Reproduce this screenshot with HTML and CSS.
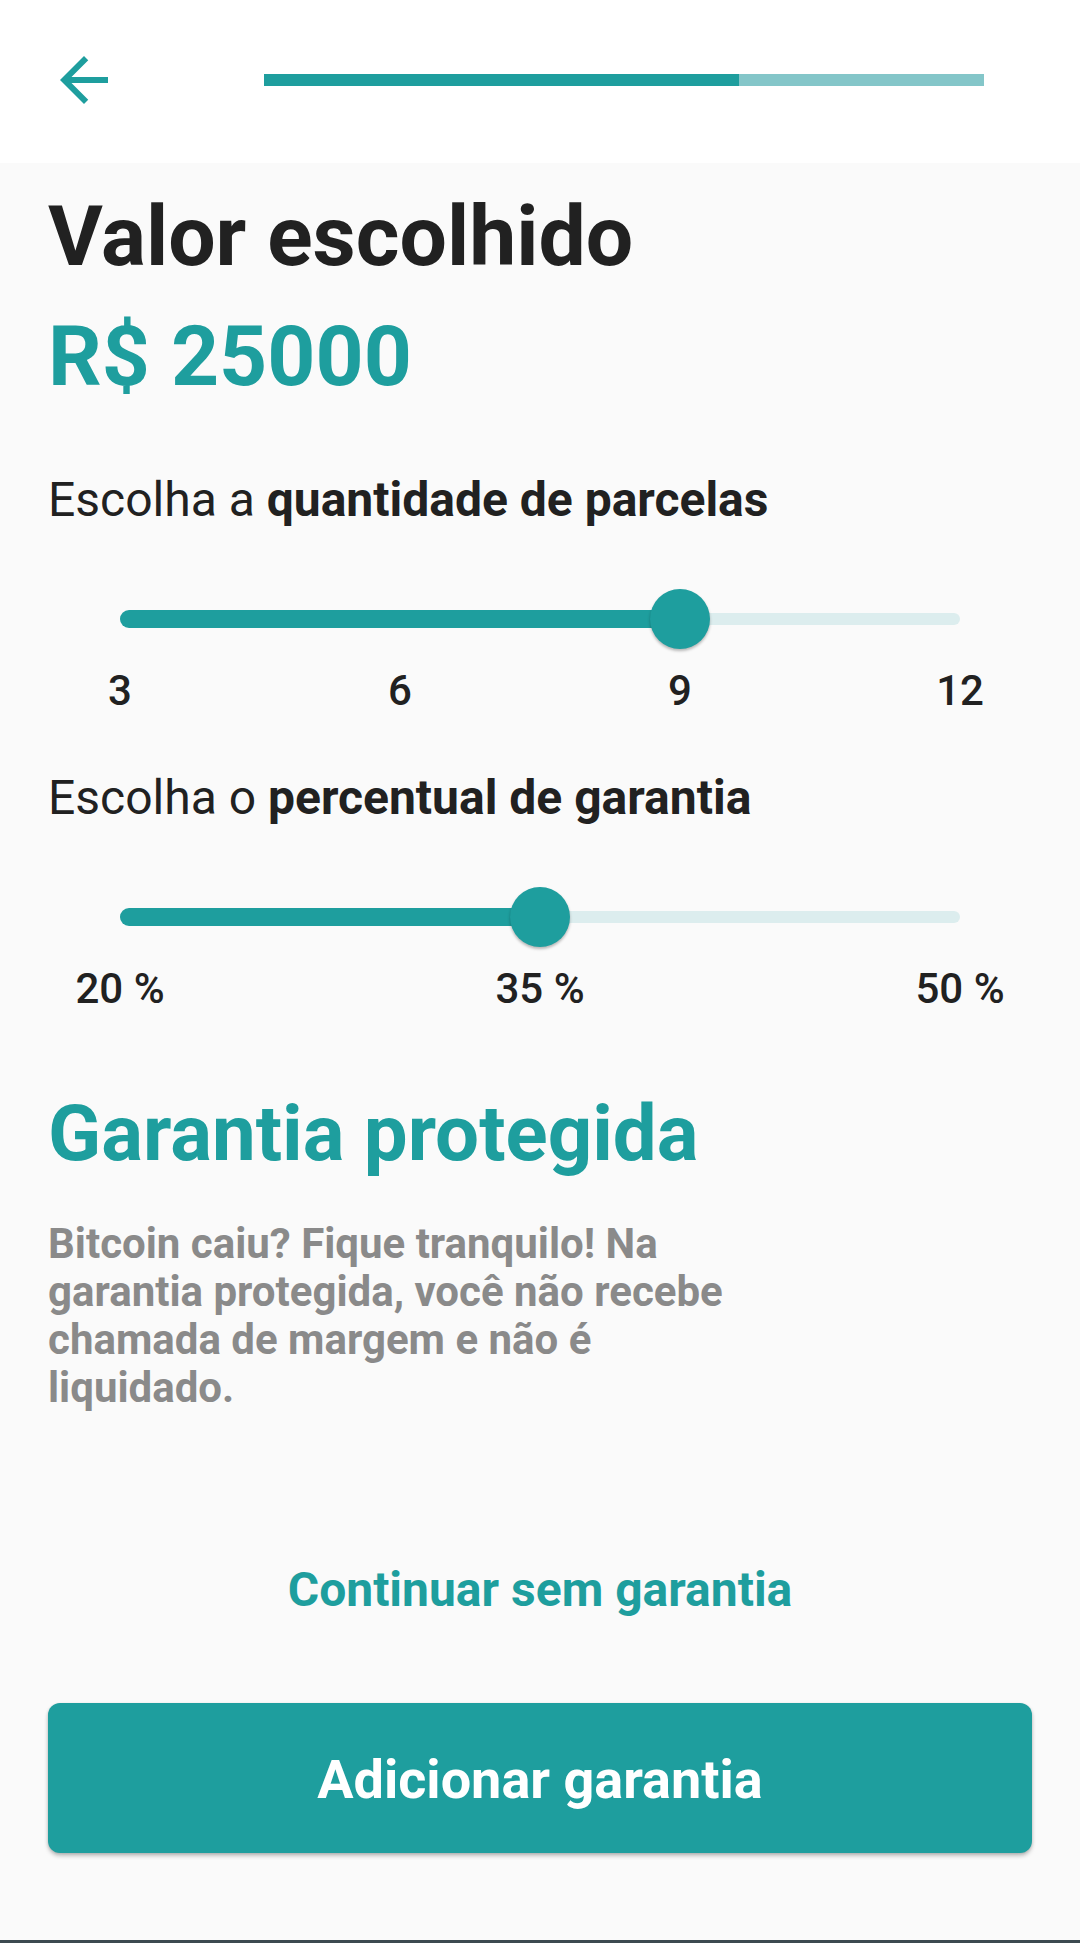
FILE: index.html
```html
<!DOCTYPE html>
<html lang="pt-BR">
<head>
<meta charset="utf-8">
<title>Valor escolhido</title>
<link rel="stylesheet" href="styles.css">
</head>
<body>
<div class="screen">
  <header class="topbar">
    <button class="back" aria-label="Voltar">
      <svg viewBox="0 0 24 24" width="72" height="72"><path d="M20 11H7.83l5.59-5.59L12 4l-8 8 8 8 1.41-1.41L7.83 13H20v-2z" fill="#1e9e9e"/></svg>
    </button>
    <div class="progress"><div class="progress-fill" style="width:66%"></div></div>
  </header>

  <main class="content">
    <h1 class="title">Valor escolhido</h1>
    <div class="amount">R$ 25000</div>

    <p class="prompt prompt-first">Escolha a <b>quantidade de parcelas</b></p>
    <div class="slider">
      <div class="track"><div class="track-fill" style="width:66.667%"></div><div class="thumb" style="left:66.667%"></div></div>
    </div>
    <div class="ticks">
      <span class="tick"><span>3</span></span>
      <span class="tick"><span>6</span></span>
      <span class="tick"><span>9</span></span>
      <span class="tick"><span>12</span></span>
    </div>

    <p class="prompt prompt-second">Escolha o <b>percentual de garantia</b></p>
    <div class="slider">
      <div class="track"><div class="track-fill" style="width:50%"></div><div class="thumb" style="left:50%"></div></div>
    </div>
    <div class="ticks">
      <span class="tick"><span>20 %</span></span>
      <span class="tick"><span>35 %</span></span>
      <span class="tick"><span>50 %</span></span>
    </div>

    <h2 class="section-title">Garantia protegida</h2>
    <p class="desc">Bitcoin caiu? Fique tranquilo! Na garantia protegida, você não recebe chamada de margem e não é liquidado.</p>

    <a class="link" href="#">Continuar sem garantia</a>
    <button class="primary">Adicionar garantia</button>
  </main>
  <div class="navbar"></div>
</div>
</body>
</html>
```

FILE: styles.css
```css
* { box-sizing: border-box; }

html, body {
  margin: 0;
  padding: 0;
}

body {
  font-family: Roboto, "Noto Sans", "Liberation Sans", sans-serif;
  background: #fafafa;
  color: #212121;
}

.screen {
  width: 1080px;
  height: 1943px;
  display: flex;
  flex-direction: column;
  overflow: hidden;
}

.topbar {
  height: 163px;
  background: #ffffff;
  display: flex;
  align-items: center;
  padding-left: 48px;
  flex-shrink: 0;
}

.back {
  width: 72px;
  height: 72px;
  padding: 0;
  border: 0;
  background: none;
  display: flex;
  margin-top: -3px;
}

.progress {
  margin-left: 144px;
  width: 720px;
  height: 12px;
  background: #84c6c9;
  margin-top: -3px;
}

.progress-fill {
  height: 100%;
  background: #1e9e9e;
}

.content {
  flex: 1;
  display: flex;
  flex-direction: column;
  padding: 0 48px;
}

.title {
  margin: 24px 0 0;
  font-size: 84px;
  line-height: 100px;
  font-weight: 700;
  color: #212121;
}

.amount {
  margin-top: 20px;
  font-size: 84px;
  line-height: 100px;
  font-weight: 700;
  color: #1e9e9e;
}

.prompt {
  margin: 0;
  font-size: 48px;
  line-height: 56px;
  font-weight: 400;
  color: #212121;
}

.prompt b { font-weight: 700; }

.prompt-first { margin-top: 65px; }
.prompt-second { margin-top: 54px; }

.slider {
  margin: 61px 72px 0;
  height: 60px;
  display: flex;
  align-items: center;
}

.track {
  position: relative;
  width: 100%;
  height: 12px;
  border-radius: 6px;
  background: #dcedee;
}

.track-fill {
  position: absolute;
  left: 0;
  top: -3px;
  height: 18px;
  border-radius: 9px 0 0 9px;
  background: #1e9e9e;
}

.thumb {
  position: absolute;
  top: 50%;
  width: 60px;
  height: 60px;
  margin: -30px 0 0 -30px;
  border-radius: 50%;
  background: #1e9e9e;
  box-shadow: 0 2px 3px rgba(0, 0, 0, 0.28);
}

.ticks {
  margin: 17px 72px 0;
  display: flex;
  justify-content: space-between;
  font-size: 42px;
  line-height: 50px;
  font-weight: 500;
  color: #212121;
}

.tick {
  width: 0;
  display: flex;
  justify-content: center;
  white-space: nowrap;
}

.section-title {
  margin: 74px 0 0;
  font-size: 78px;
  line-height: 92px;
  font-weight: 700;
  color: #1e9e9e;
}

.desc {
  margin: 40px 0 0;
  max-width: 700px;
  font-size: 42px;
  line-height: 48px;
  font-weight: 700;
  color: #8a8a8a;
}

.link {
  margin-top: 150px;
  align-self: center;
  font-size: 48px;
  line-height: 56px;
  font-weight: 700;
  color: #1e9e9e;
  text-decoration: none;
}

.primary {
  margin-top: 85px;
  height: 150px;
  width: 100%;
  border: 0;
  border-radius: 12px;
  background: #1e9e9e;
  color: #ffffff;
  font-family: inherit;
  font-size: 54px;
  font-weight: 700;
  padding-top: 3px;
  box-shadow: 0 3px 4px rgba(0, 0, 0, 0.22), 0 1px 3px rgba(0, 0, 0, 0.12);
}

.navbar {
  height: 3px;
  background: #3c4a50;
  flex-shrink: 0;
}
```
